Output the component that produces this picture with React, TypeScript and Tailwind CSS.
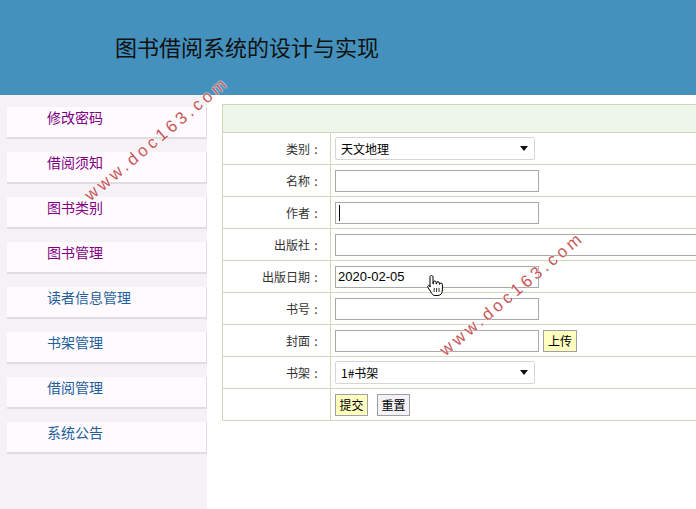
import React from "react";

const menu = [
  { t: "修改密码", c: "text-[#800080]" },
  { t: "借阅须知", c: "text-[#800080]" },
  { t: "图书类别", c: "text-[#800080]" },
  { t: "图书管理", c: "text-[#800080]" },
  { t: "读者信息管理", c: "text-[#1f5f9c]" },
  { t: "书架管理", c: "text-[#1f5f9c]" },
  { t: "借阅管理", c: "text-[#1f5f9c]" },
  { t: "系统公告", c: "text-[#1f5f9c]" },
];

const font = { fontFamily: '"Noto Sans CJK SC", "Liberation Sans", sans-serif' };

function Row({ label, children }: { label: string; children?: React.ReactNode }) {
  return (
    <tr className="h-[32px]">
      <td className="w-[108px] border border-[#cfd8b8] pr-[8px] text-right text-[12px] text-[#333]">
        {label}
        {label && <span className="inline-block w-[12px] text-center">:</span>}
      </td>
      <td className="border border-[#cfd8b8] pl-[4px]">{children}</td>
    </tr>
  );
}

function Select({ value }: { value: string }) {
  return (
    <div className="flex h-[23px] w-[200px] items-center justify-between rounded-[2px] border border-[#d6d6d6] bg-white pl-[5px] pr-[6px] text-[12px] text-black">
      <span>{value}</span>
      <svg width="8" height="5" viewBox="0 0 8 5"><path d="M0 0h8L4 5z" fill="#111" /></svg>
    </div>
  );
}

function TextBox({ w = 204, children }: { w?: number; children?: React.ReactNode }) {
  return (
    <div
      className="flex h-[22px] shrink-0 items-center border border-[#a9a9a9] bg-white pl-[2px] text-[13px] text-black"
      style={{ width: w }}
    >
      {children}
    </div>
  );
}

function Watermark({ x, y }: { x: number; y: number }) {
  return (
    <div className="pointer-events-none absolute h-0 w-0" style={{ left: x, top: y }}>
      <span
        className="absolute -translate-x-1/2 -translate-y-1/2 rotate-[-40deg] whitespace-nowrap text-[17px] tracking-[3.5px] text-[#c8585a]"
        style={{ fontFamily: '"Liberation Sans", sans-serif', textShadow: "0 0 2px #fff, 0 0 1px #fff" }}
      >
        www.doc163.com
      </span>
    </div>
  );
}

export default function App() {
  return (
    <div className="relative h-[509px] w-[696px] overflow-hidden bg-white" style={font}>
      <div className="flex h-[95px] items-center bg-[#4491bd] pl-[115px]">
        <h1 className="mt-[-4px] text-[22px] leading-none text-[#111]">图书借阅系统的设计与实现</h1>
      </div>
      <div className="flex h-[414px]">
        <div className="flex w-[207px] shrink-0 flex-col gap-[13px] bg-[#f5f2f5] pl-[7px] pt-[12px]">
          {menu.map((m) => (
            <div
              key={m.t}
              className={`h-[32px] whitespace-nowrap border-b-2 border-r border-[#e0dde0] bg-[#fefafe] pl-[40px] text-[14px] leading-[20px] ${m.c}`}
            >
              {m.t}
            </div>
          ))}
        </div>
        <div className="min-w-0 flex-1 overflow-hidden pl-[15px] pt-[9px]">
          <table className="w-[560px] min-w-[560px] border-collapse">
            <tbody>
              <tr className="h-[28px]">
                <td colSpan={2} className="border border-[#cfd8b8] bg-[#eef6eb]"></td>
              </tr>
              <Row label="类别">
                <Select value="天文地理" />
              </Row>
              <Row label="名称">
                <TextBox />
              </Row>
              <Row label="作者">
                <TextBox>
                  <span className="ml-[1px] inline-block h-[16px] w-[1px] bg-black" />
                </TextBox>
              </Row>
              <Row label="出版社">
                <TextBox w={420} />
              </Row>
              <Row label="出版日期">
                <TextBox>
                  <span style={{ fontFamily: '"Liberation Sans", sans-serif' }}>2020-02-05</span>
                </TextBox>
              </Row>
              <Row label="书号">
                <TextBox />
              </Row>
              <Row label="封面">
                <div className="flex items-center gap-[4px]">
                  <TextBox />
                  <button className="h-[22px] w-[34px] shrink-0 border border-[#a0a0a0] bg-[#ffffc0] text-[12px] text-black">上传</button>
                </div>
              </Row>
              <Row label="书架">
                <Select value="1#书架" />
              </Row>
              <Row label="">
                <div className="flex items-center gap-[9px]">
                  <button className="h-[22px] w-[33px] border border-[#a0a0a0] bg-[#ffffc0] text-[12px] text-black">提交</button>
                  <button className="h-[22px] w-[33px] border border-[#a0a0a0] bg-[#f4f2f8] text-[12px] text-black">重置</button>
                </div>
              </Row>
            </tbody>
          </table>
        </div>
      </div>
      <Watermark x={157} y={139} />
      <Watermark x={512} y={294} />
      <svg className="pointer-events-none absolute left-[426px] top-[274px]" width="20" height="24" viewBox="0 0 20 24">
        <path
          d="M5.5 1.5c.9 0 1.5.6 1.5 1.5v7h.4V8.3c0-.8.6-1.3 1.4-1.3s1.4.5 1.4 1.3V10h.4V9c0-.8.6-1.3 1.4-1.3s1.4.5 1.4 1.3v1.3h.4c0-.8.6-1.2 1.3-1.2.8 0 1.3.6 1.3 1.4V16c0 3-1.6 5.5-4.5 5.5H9c-1.4 0-2.3-.6-3-1.7L2 13.5c-.5-.8-.3-1.6.4-2 .7-.4 1.4-.1 1.9.6L4 13V3c0-.9.6-1.5 1.5-1.5z"
          fill="#fff"
          stroke="#000"
          strokeWidth="1"
        />
        <path d="M8.2 14v4M10.6 14v4M13 14v4" stroke="#000" strokeWidth="0.8" />
      </svg>
    </div>
  );
}
